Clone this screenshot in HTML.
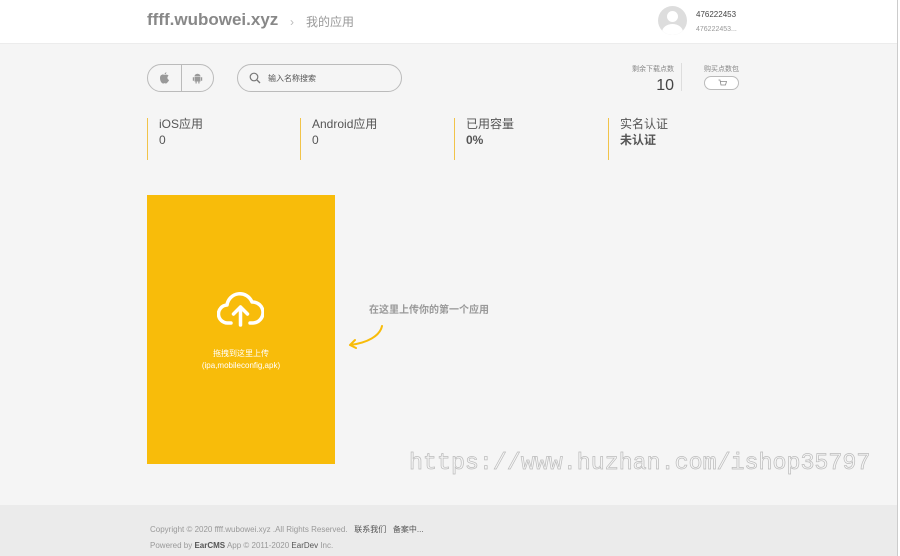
<!DOCTYPE html>
<html><head><meta charset="utf-8"><style>
*{margin:0;padding:0;box-sizing:border-box}
body{width:900px;height:556px;background:#f5f5f5;font-family:"Liberation Sans","Noto Sans CJK SC",sans-serif;position:relative;overflow:hidden;color:#555}
.hdr{position:absolute;left:0;top:0;width:897px;height:44px;background:#fff;border-bottom:1px solid #ececec}
.logo{position:absolute;left:147px;top:10px;font-size:17px;font-weight:bold;color:#888}
.crumb{position:absolute;left:290px;top:13px;font-size:12px;color:#999}
.crumb b{font-weight:normal;color:#bbb;margin-right:12px}
.av{position:absolute;left:658px;top:6px;width:29px;height:29px;border-radius:50%;background:#ddd;overflow:hidden}
.av:before{content:"";position:absolute;left:9px;top:5px;width:11px;height:11px;border-radius:50%;background:#fff}
.av:after{content:"";position:absolute;left:4px;top:18px;width:21px;height:16px;border-radius:50%;background:#fff}
.u1{position:absolute;left:696px;top:10px;font-size:8px;color:#444}
.u2{position:absolute;left:696px;top:26px;font-size:7px;color:#999}
.sb{position:absolute;left:897px;top:0;width:3px;height:556px;background:#fff;border-left:1px solid #ccc}
.os{position:absolute;left:147px;top:64px;width:67px;height:28px;border:1px solid #bbb;border-radius:14px}
.os i{position:absolute;left:33px;top:0;width:1px;height:26px;background:#bbb}
.srch{position:absolute;left:237px;top:64px;width:165px;height:28px;border:1px solid #bbb;border-radius:14px;font-size:8px;color:#555;padding:8px 0 0 30px}
.rem{position:absolute;left:600px;top:64px;width:74px;text-align:right;font-size:7px;color:#888}
.rem div{font-size:16px;color:#444;margin-top:3px}
.vl{position:absolute;left:681px;top:63px;width:1px;height:28px;background:#ddd}
.buy{position:absolute;left:704px;top:64px;font-size:7px;color:#888}
.cart{position:absolute;left:704px;top:76px;width:35px;height:14px;border:1px solid #bbb;border-radius:7px;background:#fff}
.st{position:absolute;top:118px;height:42px;border-left:1px solid #f1c349;padding-left:11px;font-size:12px;color:#555;line-height:13px}
.st div{margin-top:3px;font-size:12px}
.card{position:absolute;left:147px;top:195px;width:188px;height:269px;background:#f8bc0a;color:#fff;text-align:center}
.tip{position:absolute;left:369px;top:301px;font-size:10px;font-weight:bold;color:#999}
.wm{position:absolute;left:409px;top:450px;font-family:"Liberation Mono",monospace;font-size:23.3px;color:transparent;-webkit-text-stroke:0.7px #bbb;white-space:nowrap}
.ft{position:absolute;left:0;top:505px;width:897px;height:51px;background:#ebebeb;font-size:8px;color:#999}
.ft p{position:absolute;left:150px}
.ft span{color:#555}
</style></head><body>
<div class="hdr">
<div class="logo">ffff.wubowei.xyz</div>
<div class="crumb"><b>›</b>我的应用</div>
<div class="av"></div>
<div class="u1">476222453</div>
<div class="u2">476222453...</div>
</div>
<div class="sb"></div>
<div class="os"><i></i>
<svg style="position:absolute;left:11px;top:7px" width="11" height="12" viewBox="0 0 11 12"><path d="M5.5 3C4 2 1 2.5 1 6s2 5.5 3 5.5 1-.4 1.5-.4 1 .4 1.6.4S10 9 10 8c-1-.5-1.6-1.3-1.6-2.3 0-1 .7-1.7 1.2-2C8.6 2.4 7 2.3 5.5 3zM5.5 2.5C5.5 1.3 6.4.4 7.4.3 7.5 1.4 6.6 2.4 5.5 2.5z" fill="#999"/></svg>
<svg style="position:absolute;left:44px;top:7px" width="11" height="12" viewBox="0 0 11 12"><path d="M2.5 4.5a3 2.8 0 0 1 6 0z M2.5 5h6v4.5h-6z M0.8 5.2h1.2v3.5h-1.2z M9 5.2h1.2v3.5h-1.2z M3.5 9.5h1.2v2h-1.2z M6.3 9.5h1.2v2h-1.2z" fill="#999"/></svg>
</div>
<div class="srch">
<svg style="position:absolute;left:11px;top:7px" width="12" height="12" viewBox="0 0 12 12"><circle cx="5" cy="5" r="3.8" fill="none" stroke="#777" stroke-width="1.2"/><path d="M8 8l3 3" stroke="#777" stroke-width="1.3"/></svg>输入名称搜索</div>
<div class="rem">剩余下载点数<div>10</div></div>
<div class="vl"></div>
<div class="buy">购买点数包</div>
<div class="cart"><svg style="position:absolute;left:13px;top:2px" width="9" height="9" viewBox="0 0 9 9"><path d="M0.5 1h1.5l1 5h4.5l1-3.5H2.5" fill="none" stroke="#888" stroke-width="0.8"/></svg></div>
<div class="st" style="left:147px">iOS应用<div>0</div></div>
<div class="st" style="left:300px">Android应用<div>0</div></div>
<div class="st" style="left:454px">已用容量<div style="font-weight:bold">0%</div></div>
<div class="st" style="left:608px">实名认证<div style="font-weight:bold">未认证</div></div>
<div class="card">
<svg style="position:absolute;left:70px;top:95px" width="47" height="38" viewBox="0 0 47 38"><path d="M14 33H11a9 9 0 0 1-1-18A13 13 0 0 1 35 12a10.5 10.5 0 0 1 1 21h-3" fill="none" stroke="#fff" stroke-width="3.5" stroke-linecap="round" stroke-linejoin="round"/><path d="M23.5 35V17M16.5 24l7-7 7 7" fill="none" stroke="#fff" stroke-width="3.5" stroke-linecap="round" stroke-linejoin="round"/></svg>
<div style="position:absolute;left:0;width:188px;top:153px;font-size:8px;line-height:12px">拖拽到这里上传<br>(ipa,mobileconfig,apk)</div>
</div>
<div class="tip">在这里上传你的第一个应用</div>
<svg style="position:absolute;left:345px;top:322px" width="42" height="28" viewBox="0 0 42 28"><path d="M37 4C35 14 22 21 5 23M5 23l5-5M5 23l6 3" fill="none" stroke="#f8bc0a" stroke-width="2" stroke-linecap="round"/></svg>
<div class="wm">https://www.huzhan.com/ishop35797</div>
<div class="ft">
<p style="top:19px">Copyright © 2020 ffff.wubowei.xyz .All Rights Reserved. &nbsp; <span>联系我们</span> &nbsp; <span>备案中...</span></p>
<p style="top:36px">Powered by <b style="color:#555">EarCMS</b> App © 2011-2020 <span>EarDev</span> Inc.</p>
</div>
</body></html>
